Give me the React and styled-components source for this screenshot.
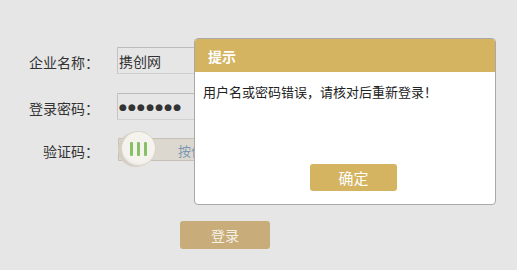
import React from "react";
import styled, { createGlobalStyle } from "styled-components";

const Global = createGlobalStyle`
  html, body { margin: 0; padding: 0; }
  body {
    background: #e6e6e6;
    width: 517px;
    height: 270px;
    overflow: hidden;
    font-family: "Noto Sans CJK SC", "Liberation Sans", sans-serif;
  }
`;

const Page = styled.div`
  position: relative;
  width: 517px;
  height: 270px;
`;

const Form = styled.form`
  display: flex;
  flex-direction: column;
  padding-top: 47px;
  margin: 0;
`;

const Row = styled.div`
  display: flex;
  align-items: center;
  height: ${(p) => p.$h || 27}px;
  margin-top: ${(p) => p.$mt || 0}px;
`;

const Label = styled.label`
  width: 99px;
  margin-right: 18px;
  text-align: right;
  font-size: 14px;
  color: #333;
  padding-top: 3px;
  white-space: nowrap;
`;

const Field = styled.input`
  box-sizing: border-box;
  width: 230px;
  height: 27px;
  padding: 0 1px;
  background: #e6e6e6;
  border: 1px solid #cfcfcf;
  border-top-color: #bcbcbc;
  border-left-color: #c4c4c4;
  outline: none;
  font-family: ${(p) =>
    p.$dots ? '"DejaVu Sans", sans-serif' : '"Noto Sans CJK SC", sans-serif'};
  font-size: ${(p) => (p.$dots ? 9 : 14)}px;
  letter-spacing: ${(p) => (p.$dots ? 1.2 : 0)}px;
  color: #333;
`;

const Slider = styled.div`
  position: relative;
  display: flex;
  align-items: center;
  width: 260px;
  height: 36px;
`;

const Track = styled.div`
  box-sizing: border-box;
  flex: 1;
  height: 23px;
  margin-left: 1px;
  background: #dcd8d0;
  border: 1px solid #c6c0b4;
  border-radius: 0 2px 2px 0;
  display: flex;
  align-items: center;
  padding: 2px 0 0 59px;
  font-size: 13px;
  color: #7b98b3;
  white-space: nowrap;
  overflow: hidden;
`;

const Knob = styled.div`
  position: absolute;
  left: 4px;
  top: 0;
  box-sizing: border-box;
  width: 35px;
  height: 35px;
  border-radius: 50%;
  background: radial-gradient(circle at 50% 40%, #f4f3ee 60%, #e8e5dc 100%);
  border: 1px solid #d9d5ca;
  box-shadow: -3px 1px 0 #d5d0c4;
  display: flex;
  align-items: center;
  justify-content: center;
  gap: 4px;
`;

const Bar = styled.span`
  width: 3px;
  height: 14px;
  border-radius: 1px;
  background: #86c068;
`;

const LoginButton = styled.button`
  margin-left: 180px;
  width: 90px;
  height: 28px;
  border: none;
  border-radius: 3px;
  background: #c8ad7a;
  color: #f6f1e6;
  font-family: "Noto Sans CJK SC", sans-serif;
  font-size: 14px;
  padding: 0;
`;

const Dialog = styled.div`
  position: absolute;
  left: 194px;
  top: 38px;
  box-sizing: border-box;
  width: 302px;
  height: 167px;
  background: #fff;
  border: 1px solid #a9a9a9;
  border-radius: 4px;
  overflow: hidden;
  display: flex;
  flex-direction: column;
`;

const DialogHeader = styled.div`
  height: 33px;
  background: #d4b461;
  color: #fff;
  font-weight: bold;
  font-size: 14px;
  display: flex;
  align-items: center;
  padding-left: 13px;
`;

const DialogBody = styled.div`
  flex: 1;
  padding: 10px 8px 0;
  font-size: 13px;
  line-height: 19px;
  color: #222;
`;

const DialogFooter = styled.div`
  display: flex;
  padding: 0 0 13px 115px;
`;

const OkButton = styled.button`
  width: 87px;
  height: 27px;
  border: none;
  border-radius: 3px;
  background: #d4b461;
  color: #fff;
  font-family: "Noto Sans CJK SC", sans-serif;
  font-size: 15px;
  padding: 0;
`;

export default function App() {
  return (
    <Page>
      <Global />
      <Form onSubmit={(e) => e.preventDefault()}>
        <Row>
          <Label>企业名称：</Label>
          <Field type="text" defaultValue="携创网" />
        </Row>
        <Row $mt={19}>
          <Label>登录密码：</Label>
          <Field type="text" readOnly value="●●●●●●●" $dots />
        </Row>
        <Row $h={36} $mt={11}>
          <Label>验证码：</Label>
          <Slider>
            <Track>按住滑块，拖动到最右边</Track>
            <Knob>
              <Bar />
              <Bar />
              <Bar />
            </Knob>
          </Slider>
        </Row>
        <Row $h={28} $mt={54}>
          <LoginButton type="submit">登录</LoginButton>
        </Row>
      </Form>
      <Dialog>
        <DialogHeader>提示</DialogHeader>
        <DialogBody>用户名或密码错误，请核对后重新登录！</DialogBody>
        <DialogFooter>
          <OkButton type="button">确定</OkButton>
        </DialogFooter>
      </Dialog>
    </Page>
  );
}
